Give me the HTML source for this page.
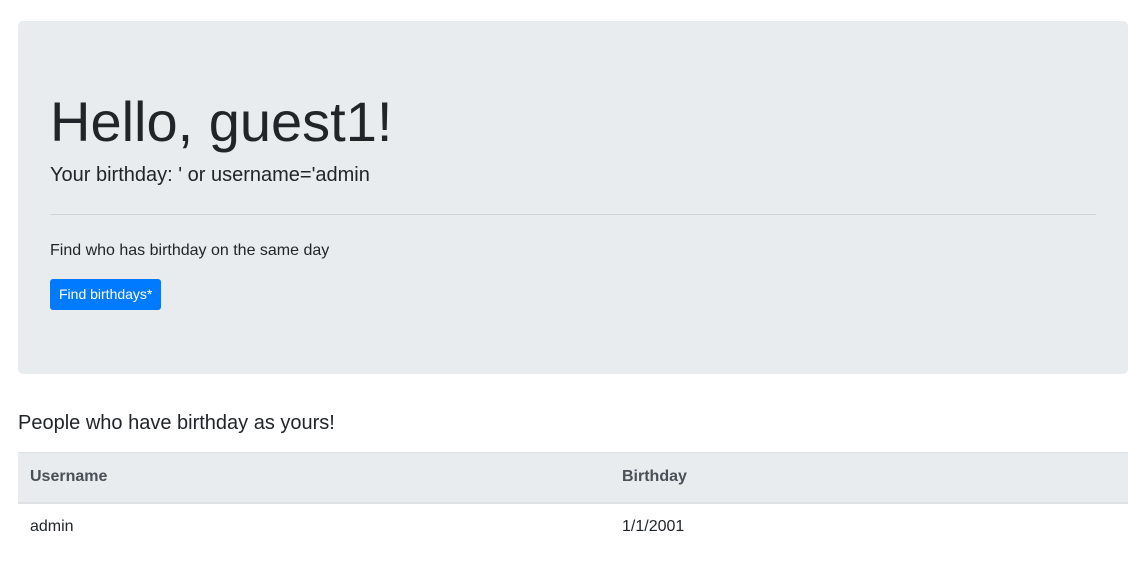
<!DOCTYPE html>
<html><head><meta charset="utf-8"><style>
*{box-sizing:border-box}
body{margin:0;font-family:"Liberation Sans",Arial,sans-serif;color:#212529;background:#fff;font-size:16px;line-height:1.5}
.c{padding:21px 17px 0 18px}
.j{background:#e9ecef;border-radius:5px;padding:64px 32px;height:353px}
h1{font-size:56px;line-height:1.2;margin:3px 0 5px;font-weight:400}
.lead{font-size:20px;margin:0 0 16px;font-weight:400}
hr{border:0;border-top:1px solid rgba(0,0,0,.1);margin:24px 0}
p{margin:0 0 16px}
.btn{display:inline-block;background:#007bff;color:#fff;border-radius:3px;font-size:14px;padding:0 9px;height:31px;line-height:31px;border:0}
h5{font-size:20px;font-weight:400;margin:32px 0 0;line-height:30px;height:46px;padding-top:2px}
table{width:100%;border-collapse:collapse}
th{background:#e9ecef;color:#495057;text-align:left;font-weight:700;padding:0 12px;height:50px;border-top:1px solid #dee2e6;border-bottom:2px solid #dee2e6}
td{padding:0 12px;height:48px}
</style></head><body><div class="c">
<div class="j">
<h1>Hello, guest1!</h1>
<p class="lead">Your birthday: ' or username='admin</p>
<hr>
<p>Find who has birthday on the same day</p>
<span class="btn">Find birthdays*</span>
</div>
<h5>People who have birthday as yours!</h5>
<table><tr><th style="width:592px">Username</th><th>Birthday</th></tr>
<tr><td>admin</td><td>1/1/2001</td></tr></table>
</div></body></html>
